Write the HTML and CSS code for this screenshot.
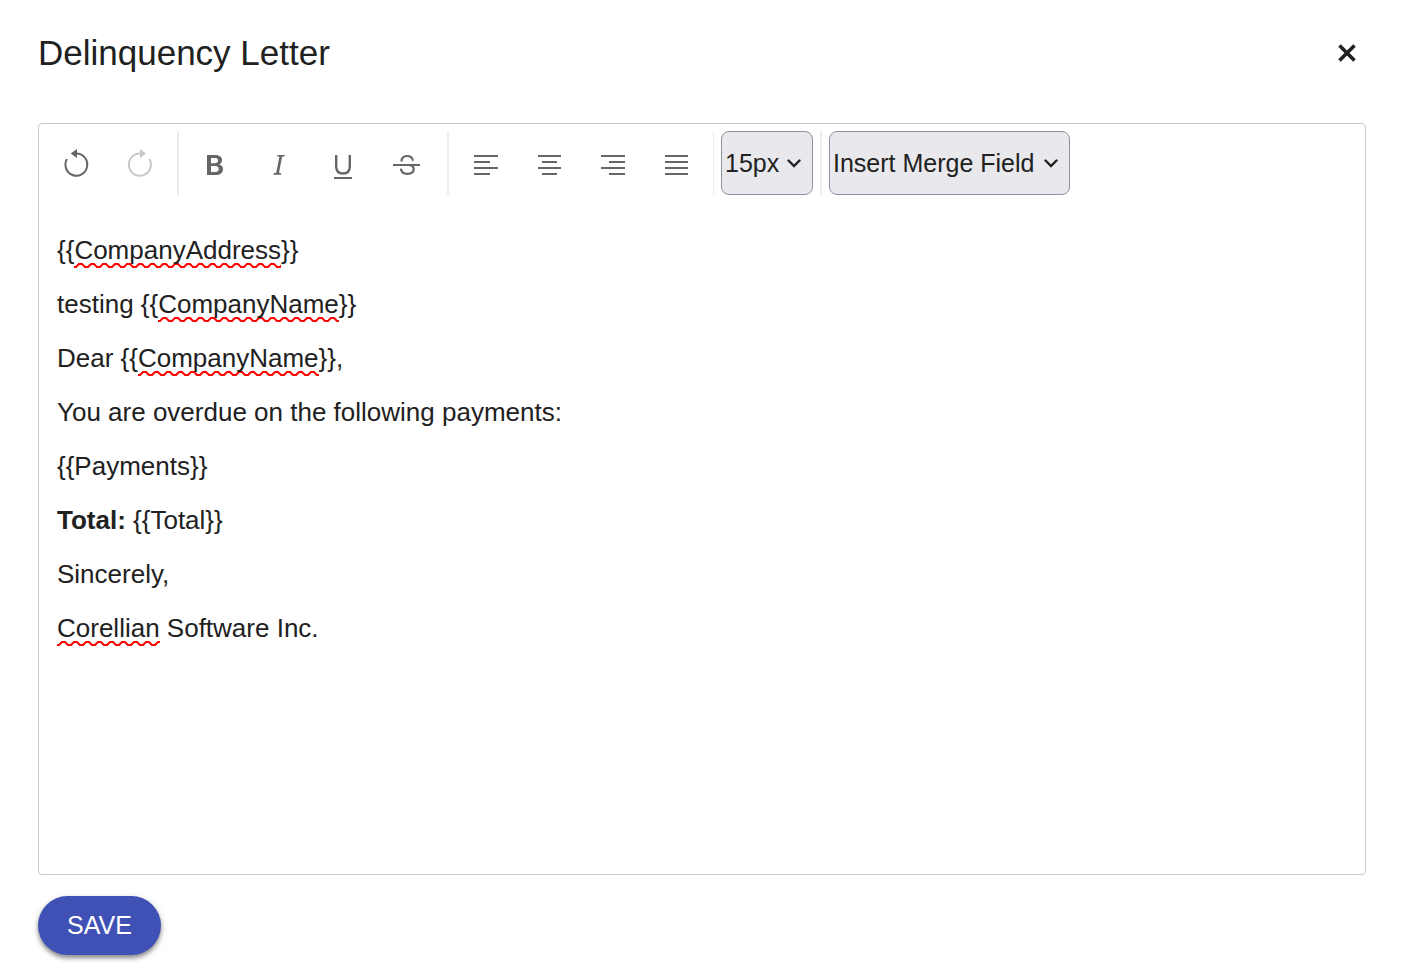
FILE: index.html
```html
<!DOCTYPE html>
<html lang="en">
<head>
<meta charset="utf-8">
<meta name="viewport" content="width=device-width, initial-scale=1">
<title>Delinquency Letter</title>
<link rel="stylesheet" href="styles.css">
</head>
<body>
<main class="dialog">
  <header class="dialog-header">
    <h1 class="dialog-title">Delinquency Letter</h1>
    <button class="close-button" type="button" aria-label="Close">
      <svg width="20" height="20" viewBox="0 0 20 20"><path d="M2.500 2.500l15 15M17.500 2.500l-15 15" fill="none" stroke="#212121" stroke-width="3.600"/></svg>
    </button>
  </header>

  <section class="editor">
    <div class="toolbar" role="toolbar" aria-label="Formatting">
      <div class="group history">
        <button class="tool" type="button" aria-label="Undo">
          <svg width="32" height="32" viewBox="0 0 32 32"><path d="M6.900 11A10.900 11.200 0 1 0 16.900 5.400" fill="none" stroke="currentColor" stroke-width="2"/><path d="M10.600 5.500L17 1v9z" fill="currentColor"/></svg>
        </button>
        <button class="tool" type="button" aria-label="Redo" disabled>
          <svg width="32" height="32" viewBox="0 0 32 32"><path d="M25.400 11A11 11.200 0 1 1 15.800 5.400" fill="none" stroke="currentColor" stroke-width="2"/><path d="M22 5.500L16 1v9z" fill="currentColor"/></svg>
        </button>
      </div>
      <div class="group">
        <button class="tool" type="button" aria-label="Bold">
          <svg width="32" height="32" viewBox="0 0 32 32"><path d="M8 7h7.500c4.800 0 7.500 1.600 7.500 5.100 0 2.300-1.200 4-3.200 4.500 2.500.5 4.200 2 4.200 4.600 0 3.800-2.900 5.800-7.700 5.800H8zM12 10v5.200h3.500c2.300 0 3.500-.8 3.500-2.700S17.800 10 15.500 10zM12 18.100V24h4c2.500 0 3.700-1 3.700-3s-1.200-2.900-3.700-2.900z" fill="currentColor" fill-rule="evenodd"/></svg>
        </button>
        <button class="tool" type="button" aria-label="Italic">
          <svg width="32" height="32" viewBox="0 0 32 32"><path d="M14.500 7H22l-.4 1.300-2.500.5L16 24.800l2.200.5-.3 1.400h-7.500l.3-1.400 2.500-.5L16.400 8.800l-2.300-.5z" fill="currentColor"/></svg>
        </button>
        <button class="tool" type="button" aria-label="Underline">
          <svg width="32" height="32" viewBox="0 0 32 32"><path d="M9.200 7v11.500c0 4.500 2.300 7 6.800 7s6.800-2.500 6.800-7V7" fill="none" stroke="currentColor" stroke-width="2.400"/><path d="M7 30h18" stroke="currentColor" stroke-width="2"/></svg>
        </button>
        <button class="tool" type="button" aria-label="Strikethrough">
          <svg width="32" height="32" viewBox="0 0 32 32"><path d="M10.500 13.600C10.500 9.500 12.600 8 16 8c3.500 0 5.600 1.600 5.800 4.800M17.500 17c3.200.2 5.200 1.700 5.200 4.100 0 3.100-2.500 4.700-6.200 4.700-4 0-6.300-1.600-6.600-5.200" fill="none" stroke="currentColor" stroke-width="2.200"/><path d="M2 17h27" stroke="currentColor" stroke-width="2"/></svg>
        </button>
      </div>
      <div class="group alignment">
        <button class="tool" type="button" aria-label="Align left">
          <svg width="32" height="32" viewBox="0 0 32 32"><path d="M4 8h24M4 14h16M4 20h24M4 26h16" stroke="currentColor" stroke-width="2"/></svg>
        </button>
        <button class="tool" type="button" aria-label="Align center">
          <svg width="32" height="32" viewBox="0 0 32 32"><path d="M4 8h23M8 14h15M4 20h23M8 26h15" stroke="currentColor" stroke-width="2"/></svg>
        </button>
        <button class="tool" type="button" aria-label="Align right">
          <svg width="32" height="32" viewBox="0 0 32 32"><path d="M3 8h24M11 14h16M3 20h24M11 26h16" stroke="currentColor" stroke-width="2"/></svg>
        </button>
        <button class="tool" type="button" aria-label="Justify">
          <svg width="32" height="32" viewBox="0 0 32 32"><path d="M3 8h23M3 14h23M3 20h23M3 26h23" stroke="currentColor" stroke-width="2"/></svg>
        </button>
      </div>
      <div class="group select-group">
        <div class="picker size-picker">
          <select class="picker-select" aria-label="Font size"><option>15px</option></select>
          <svg class="chevron" width="14" height="9" viewBox="0 0 14 9"><path d="M1.500 1.500L7 7l5.500-5.500" fill="none" stroke="#212121" stroke-width="2.400" stroke-linecap="round"/></svg>
        </div>
      </div>
      <div class="group select-group">
        <div class="picker merge-picker">
          <select class="picker-select" aria-label="Merge field"><option>Insert Merge Field</option></select>
          <svg class="chevron" width="14" height="9" viewBox="0 0 14 9"><path d="M1.500 1.500L7 7l5.500-5.500" fill="none" stroke="#212121" stroke-width="2.400" stroke-linecap="round"/></svg>
        </div>
      </div>
    </div>
    <div class="letter" contenteditable="true" spellcheck="false" role="textbox" aria-label="Letter body" aria-multiline="true">
      <p>{{<span class="misspelled">CompanyAddress</span>}}</p>
      <p>testing {{<span class="misspelled">CompanyName</span>}}</p>
      <p>Dear {{<span class="misspelled">CompanyName</span>}},</p>
      <p>You are overdue on the following payments:</p>
      <p>{{Payments}}</p>
      <p><strong>Total:</strong> {{Total}}</p>
      <p>Sincerely,</p>
      <p><span class="misspelled">Corellian</span> Software Inc.</p>
    </div>
  </section>

  <button class="save-button" type="button">SAVE</button>
</main>
</body>
</html>
```
FILE: styles.css
```css
* {
  box-sizing: border-box;
}

body {
  margin: 0;
  background: #fff;
  color: #212121;
  font-family: "Liberation Sans", Arial, sans-serif;
  font-size: 26px;
}

button,
select {
  font: inherit;
  color: inherit;
}

.dialog {
  display: flex;
  flex-direction: column;
  align-items: flex-start;
  min-height: 100vh;
  padding: 32px 39px 21px 38px;
}

.dialog-header {
  display: flex;
  justify-content: space-between;
  align-items: center;
  width: 100%;
  margin-bottom: 49px;
}

.dialog-title {
  margin: 0;
  font-size: 35px;
  font-weight: 400;
  line-height: 42px;
}

.close-button {
  display: flex;
  padding: 9px;
  border: 0;
  background: none;
}

.editor {
  display: flex;
  flex: 1;
  flex-direction: column;
  width: 100%;
  border: 1px solid #c8c8c8;
  border-radius: 4px;
}

.toolbar {
  display: flex;
  flex-wrap: wrap;
  padding: 7px 0;
}

.group {
  display: flex;
  padding: 0 8px 0 4px;
  border-right: 2px solid #ececec;
}

.history {
  padding: 0 5px;
}

.alignment {
  padding: 0 3px 0 5px;
  border-right-width: 1px;
}

.select-group {
  padding: 0 7px;
}

.group:last-child {
  border-right: 0;
}

.tool {
  display: flex;
  align-items: center;
  justify-content: center;
  width: 64px;
  height: 64px;
  padding: 2px 0 0;
  border: 0;
  background: none;
  color: #666;
}

.tool:disabled {
  color: #c8c8c8;
}

.picker {
  position: relative;
}

.size-picker {
  width: 92px;
}

.merge-picker {
  width: 241px;
}

.picker-select {
  width: 100%;
  height: 64px;
  padding: 0 4px 0 3px;
  border: 1px solid #8f8f9d;
  border-radius: 8px;
  background: #e9e9ed;
  appearance: none;
  font-size: 25px;
}

.chevron {
  position: absolute;
  top: 28px;
  right: 12px;
  pointer-events: none;
}

.letter {
  flex: 1;
  padding: 34px 18px;
  line-height: 28px;
  outline: 0;
}

.letter p {
  margin: 0 0 26px;
}

.misspelled {
  padding-bottom: 3px;
  background: url("data:image/svg+xml,%3Csvg xmlns='http://www.w3.org/2000/svg' width='12' height='5'%3E%3Cpath d='M-1 4H2L5 1H8L11 4H13' fill='none' stroke='red' stroke-width='2'/%3E%3C/svg%3E") left bottom / 12px 5px repeat-x;
}

.save-button {
  height: 59px;
  margin-top: 21px;
  padding: 0 29px;
  border: 0;
  border-radius: 30px;
  background: #3f51b5;
  box-shadow: 0 3px 4px rgba(0, 0, 0, 0.4), 0 2px 8px rgba(0, 0, 0, 0.12);
  color: #fff;
  font-size: 25px;
}
```
